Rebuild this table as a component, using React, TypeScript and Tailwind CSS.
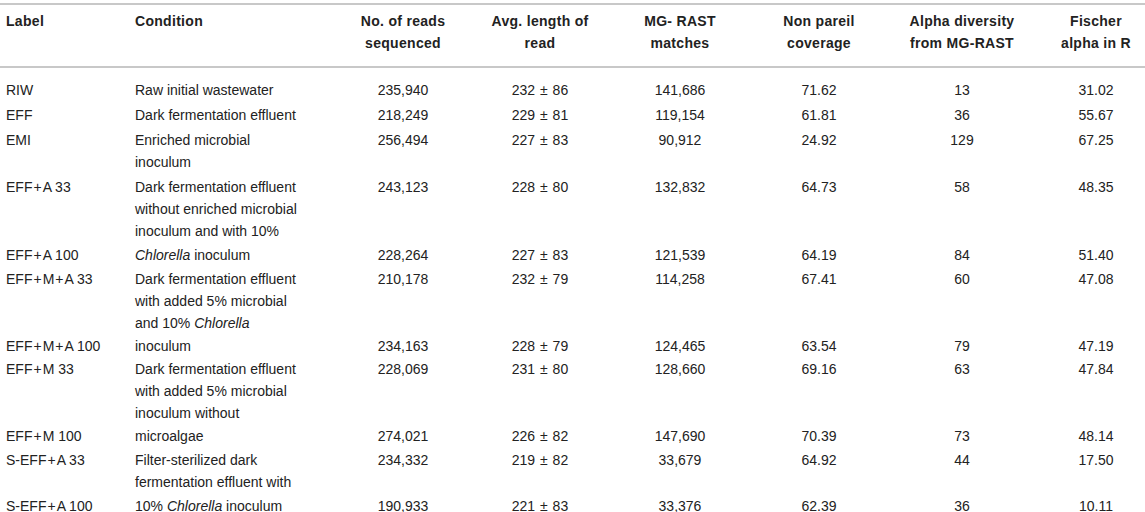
import React from "react";

type Row = { label: string; cond: React.ReactNode[]; v: string[]; pad: string };

const rows: Row[] = [
  { label: "RIW", cond: ["Raw initial wastewater"], v: ["235,940", "232 ± 86", "141,686", "71.62", "13", "31.02"], pad: "pt-[1px] pb-[1px]" },
  { label: "EFF", cond: ["Dark fermentation effluent"], v: ["218,249", "229 ± 81", "119,154", "61.81", "36", "55.67"], pad: "pt-[2px] pb-[1px]" },
  { label: "EMI", cond: ["Enriched microbial", "inoculum"], v: ["256,494", "227 ± 83", "90,912", "24.92", "129", "67.25"], pad: "pt-[2px] pb-[1px]" },
  {
    label: "EFF+A 33",
    cond: ["Dark fermentation effluent", "without enriched microbial", "inoculum and with 10%"],
    v: ["243,123", "228 ± 80", "132,832", "64.73", "58", "48.35"],
    pad: "pt-[2px] pb-[1px]",
  },
  {
    label: "EFF+A 100",
    cond: [
      <>
        <i>Chlorella</i> inoculum
      </>,
    ],
    v: ["228,264", "227 ± 83", "121,539", "64.19", "84", "51.40"],
    pad: "pt-[1px] pb-[1px]",
  },
  {
    label: "EFF+M+A 33",
    cond: [
      "Dark fermentation effluent",
      "with added 5% microbial",
      <>
        and 10% <i>Chlorella</i>
      </>,
    ],
    v: ["210,178", "232 ± 79", "114,258", "67.41", "60", "47.08"],
    pad: "pt-[1px] pb-[1px]",
  },
  { label: "EFF+M+A 100", cond: ["inoculum"], v: ["234,163", "228 ± 79", "124,465", "63.54", "79", "47.19"], pad: "pt-0 pb-[1px]" },
  {
    label: "EFF+M 33",
    cond: ["Dark fermentation effluent", "with added 5% microbial", "inoculum without"],
    v: ["228,069", "231 ± 80", "128,660", "69.16", "63", "47.84"],
    pad: "pt-0 pb-[1px]",
  },
  { label: "EFF+M 100", cond: ["microalgae"], v: ["274,021", "226 ± 82", "147,690", "70.39", "73", "48.14"], pad: "pt-0 pb-[1px]" },
  {
    label: "S-EFF+A 33",
    cond: ["Filter-sterilized dark", "fermentation effluent with"],
    v: ["234,332", "219 ± 82", "33,679", "64.92", "44", "17.50"],
    pad: "pt-[1px] pb-[1px]",
  },
  {
    label: "S-EFF+A 100",
    cond: [
      <>
        10% <i>Chlorella</i> inoculum
      </>,
    ],
    v: ["190,933", "221 ± 83", "33,376", "62.39", "36", "10.11"],
    pad: "pt-[1px] pb-[1px]",
  },
];

const valueCols = [
  "w-[130px] text-center",
  "w-[144px] text-center",
  "w-[136px] text-center",
  "w-[142px] text-center",
  "w-[144px] text-center",
  "w-[111px] text-center pl-[13px]",
];

const headers: React.ReactNode[] = [
  <>
    No. of reads
    <br />
    sequenced
  </>,
  <>
    Avg. length of
    <br />
    read
  </>,
  <>
    MG- RAST
    <br />
    matches
  </>,
  <>
    Non pareil
    <br />
    coverage
  </>,
  <>
    Alpha diversity
    <br />
    from MG-RAST
  </>,
  <>
    Fischer
    <br />
    alpha in R
  </>,
];

function Label({ text }: { text: string }) {
  const parts = text.split("+");
  return (
    <>
      {parts.map((p, i) => (
        <React.Fragment key={i}>
          {i > 0 && <span className="mx-[1px]">+</span>}
          {p}
        </React.Fragment>
      ))}
    </>
  );
}

function Value({ text }: { text: string }) {
  if (!text.includes("±")) return <>{text}</>;
  const [a, b] = text.split("±");
  return (
    <>
      {a}
      <span className="mx-[1px]">±</span>
      {b}
    </>
  );
}

export default function App() {
  return (
    <div
      className="w-[1145px] h-[512px] overflow-hidden bg-white text-[14px] leading-[22px] text-[#222]"
      style={{ fontFamily: '"Liberation Sans", Arial, sans-serif' }}
    >
      <div className="pt-[3px]">
        <div className="flex border-t-2 border-b-2 border-[#c8c8c8] pt-[5px] pb-[12px] font-bold tracking-[0.3px] whitespace-nowrap">
          <div className="w-[135px] pl-[6px]">Label</div>
          <div className="w-[203px]">Condition</div>
          {headers.map((h, i) => (
            <div key={i} className={valueCols[i]}>
              {h}
            </div>
          ))}
        </div>
        <div className="pt-[10px]">
          {rows.map((r) => (
            <div key={r.label} className={`flex whitespace-nowrap ${r.pad}`}>
              <div className="w-[135px] pl-[6px]">
                <Label text={r.label} />
              </div>
              <div className="w-[203px] flex flex-col">
                {r.cond.map((c, j) => (
                  <span key={j}>{c}</span>
                ))}
              </div>
              {r.v.map((v, i) => (
                <div key={i} className={valueCols[i]}>
                  <Value text={v} />
                </div>
              ))}
            </div>
          ))}
        </div>
      </div>
    </div>
  );
}
